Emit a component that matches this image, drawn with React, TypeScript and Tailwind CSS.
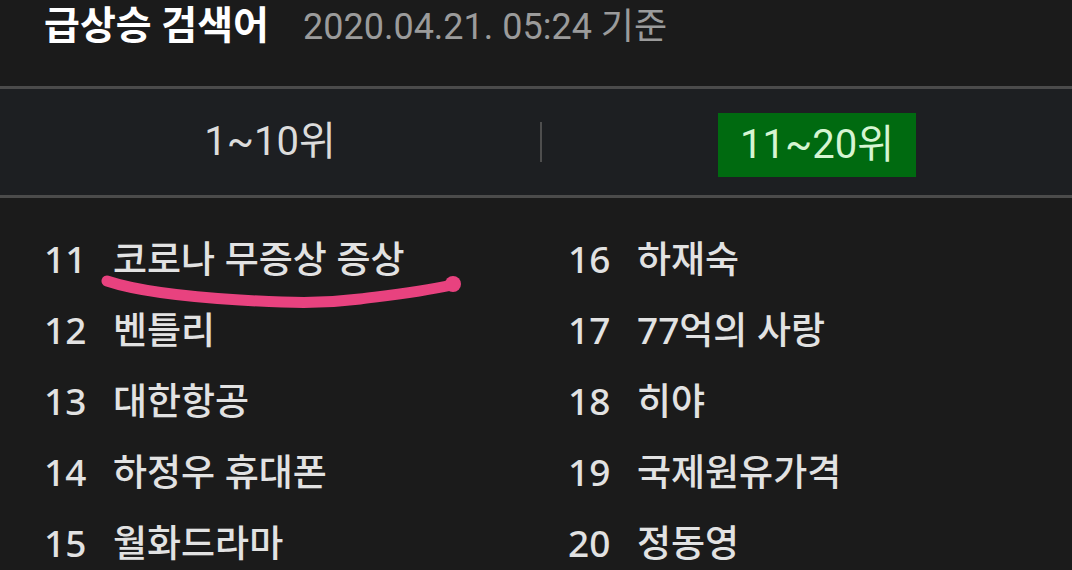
import React from "react";

const left = [
  { n: 11, t: "코로나 무증상 증상" },
  { n: 12, t: "벤틀리" },
  { n: 13, t: "대한항공" },
  { n: 14, t: "하정우 휴대폰" },
  { n: 15, t: "월화드라마" },
];
const right = [
  { n: 16, t: "하재숙" },
  { n: 17, t: "77억의 사랑" },
  { n: 18, t: "히야" },
  { n: 19, t: "국제원유가격" },
  { n: 20, t: "정동영" },
];

const font = { fontFamily: '"Roboto", "Noto Sans CJK KR", sans-serif' };
const listFont = { fontFamily: '"Noto Sans", "Noto Sans CJK KR", sans-serif' };

function Row({ n, t }: { n: number; t: string }) {
  return (
    <div className="flex h-[71px] items-center text-[37px] font-medium leading-none text-[#e2e2e2]" style={listFont}>
      <span className="w-[69px] shrink-0">{n}</span>
      <span>{t}</span>
    </div>
  );
}

export default function App() {
  return (
    <div className="relative h-[570px] w-[1072px] overflow-hidden bg-[#1b1b1b]" style={font}>
      {/* header */}
      <div className="flex h-[86px] items-start gap-[34px] pl-[44px] pt-[5px]">
        <span className="text-[39px] font-bold leading-[42px] text-white">급상승 검색어</span>
        <span className="text-[36px] leading-[44px] text-[#9b9b9b]">2020.04.21. 05:24 기준</span>
      </div>
      <div className="h-[3px] bg-[#4b4b4b]" />

      {/* tabs */}
      <div className="flex h-[106px] items-center bg-[#1d1f22] text-[40px] leading-none">
        <div className="flex w-[540px] justify-center text-[#dcdcdc]">1~10위</div>
        <div className="h-[40px] w-[2px] bg-[#4e4e4e]" />
        <div className="flex flex-1 justify-center pl-[20px] pt-[6px]">
          <div className="flex h-[64px] w-[198px] items-center justify-center bg-[#006a10] text-[#d6f5d2]">
            11~20위
          </div>
        </div>
      </div>
      <div className="h-[3px] bg-[#4b4b4b]" />

      {/* list */}
      <div className="grid grid-cols-[524px_1fr] pl-[44px] pt-[25px]">
        <div>
          {left.map((r) => (
            <Row key={r.n} {...r} />
          ))}
        </div>
        <div>
          {right.map((r) => (
            <Row key={r.n} {...r} />
          ))}
        </div>
      </div>

      {/* pink marker underline */}
      <svg className="pointer-events-none absolute left-0 top-0" width="1072" height="570">
        <path
          d="M107 281 C 140 292, 190 297, 240 300 S 320 304, 360 299 S 420 292, 452 285"
          fill="none"
          stroke="#e8427f"
          strokeWidth="11"
          strokeLinecap="round"
        />
        <circle cx="453" cy="284" r="8" fill="#e8427f" />
      </svg>
    </div>
  );
}
